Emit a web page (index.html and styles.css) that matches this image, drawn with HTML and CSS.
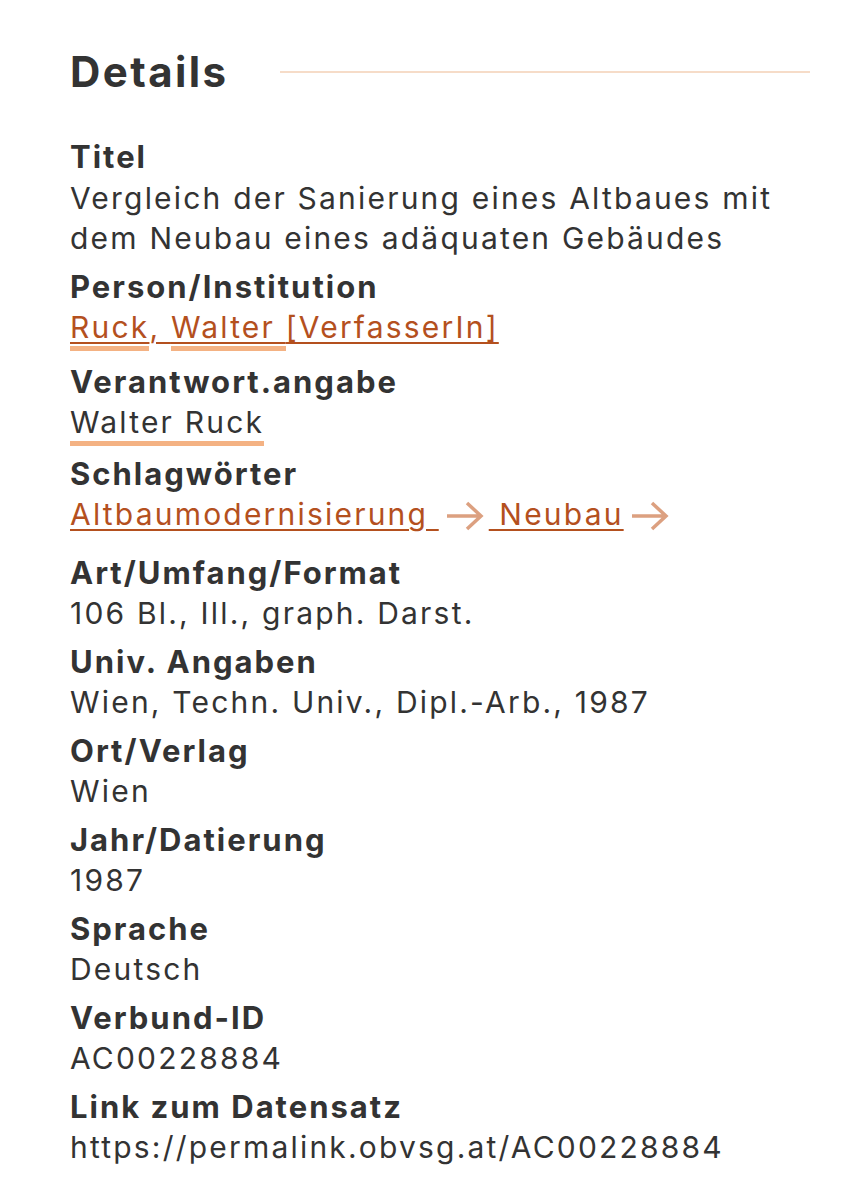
FILE: index.html
```html
<!DOCTYPE html>
<html lang="de">
<head>
<meta charset="utf-8">
<title>Details</title>
<link rel="stylesheet" href="styles.css">
</head>
<body>
<section class="details">
  <header class="details-head">
    <h2 class="details-title">Details</h2>
    <span class="details-rule"></span>
  </header>
  <dl class="fields">
    <div class="field">
      <dt>Titel</dt>
      <dd>Vergleich der Sanierung eines Altbaues mit dem Neubau eines adäquaten Gebäudes</dd>
    </div>
    <div class="field">
      <dt>Person/Institution</dt>
      <dd class="links"><a href="#" class="link"><span class="hit">Ruck</span>, <span class="hit">Walter </span>[VerfasserIn] </a></dd>
    </div>
    <div class="field">
      <dt>Verantwort.angabe</dt>
      <dd class="marked"><span class="hit">Walter Ruck</span></dd>
    </div>
    <div class="field">
      <dt>Schlagwörter</dt>
      <dd class="subjects">
        <a href="#" class="link">Altbaumodernisierung </a>
        <svg class="arrow" viewBox="0 0 38 30" aria-hidden="true"><path d="M1 15H35M21 2L35 15L21 28"/></svg>
        <a href="#" class="link"> Neubau</a>
        <svg class="arrow" viewBox="0 0 38 30" aria-hidden="true"><path d="M1 15H35M21 2L35 15L21 28"/></svg>
      </dd>
    </div>
    <div class="field">
      <dt>Art/Umfang/Format</dt>
      <dd>106 Bl., Ill., graph. Darst.</dd>
    </div>
    <div class="field">
      <dt>Univ. Angaben</dt>
      <dd>Wien, Techn. Univ., Dipl.-Arb., 1987</dd>
    </div>
    <div class="field">
      <dt>Ort/Verlag</dt>
      <dd>Wien</dd>
    </div>
    <div class="field">
      <dt>Jahr/Datierung</dt>
      <dd>1987</dd>
    </div>
    <div class="field">
      <dt>Sprache</dt>
      <dd>Deutsch</dd>
    </div>
    <div class="field">
      <dt>Verbund-ID</dt>
      <dd>AC00228884</dd>
    </div>
    <div class="field">
      <dt>Link zum Datensatz</dt>
      <dd>https://permalink.obvsg.at/AC00228884</dd>
    </div>
  </dl>
</section>
</body>
</html>
```

FILE: styles.css
```css
html, body {
  margin: 0;
  padding: 0;
  background: #ffffff;
}

body {
  font-family: Inter, Roboto, "Noto Sans", sans-serif;
  color: #333333;
}

.details {
  width: 740px;
  padding: 44px 0 0 70px;
}

.details-head {
  display: flex;
  align-items: center;
  gap: 52px;
  height: 56px;
}

.details-title {
  margin: 0;
  font-size: 42px;
  font-weight: 700;
  letter-spacing: 2.4px;
  line-height: 56px;
  color: #333333;
}

.details-rule {
  flex: 1;
  height: 2px;
  background: #f6dcc8;
}

.fields {
  margin: 37px 0 0;
  display: flex;
  flex-direction: column;
  gap: 8px;
}

.field {
  display: flex;
  flex-direction: column;
}

.field dt {
  font-size: 31px;
  font-weight: 700;
  letter-spacing: 2px;
  line-height: 40.5px;
}

.field dd {
  margin: 0;
  font-size: 30px;
  font-weight: 400;
  letter-spacing: 2.2px;
  line-height: 40.5px;
}

.link {
  color: #b4501e;
  text-decoration: underline;
  text-decoration-thickness: 2px;
  text-underline-offset: 4px;
  text-decoration-color: #b4501e;
}

.links {
  padding-bottom: 6px;
}

.marked {
  padding-bottom: 3px;
}

.hit {
  background: linear-gradient(#f4b283, #f4b283) left bottom / 100% 5px no-repeat;
  padding-bottom: 6px;
}

.subjects {
  display: flex;
  align-items: center;
  white-space: pre;
  padding-bottom: 10px;
}

.arrow {
  width: 38px;
  height: 30px;
  margin: 4px 5px 0 7px;
  fill: none;
  stroke: #dca080;
  stroke-width: 3.5;
}
```
